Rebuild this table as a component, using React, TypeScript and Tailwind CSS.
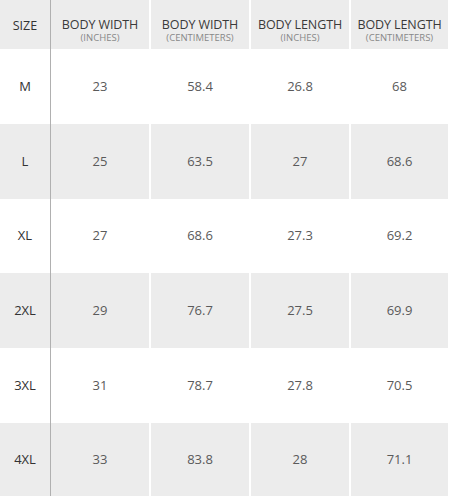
const headers = [
  { title: "BODY WIDTH", unit: "(INCHES)" },
  { title: "BODY WIDTH", unit: "(CENTIMETERS)" },
  { title: "BODY LENGTH", unit: "(INCHES)" },
  { title: "BODY LENGTH", unit: "(CENTIMETERS)" },
];

const rows = [
  { size: "M", values: ["23", "58.4", "26.8", "68"] },
  { size: "L", values: ["25", "63.5", "27", "68.6"] },
  { size: "XL", values: ["27", "68.6", "27.3", "69.2"] },
  { size: "2XL", values: ["29", "76.7", "27.5", "69.9"] },
  { size: "3XL", values: ["31", "78.7", "27.8", "70.5"] },
  { size: "4XL", values: ["33", "83.8", "28", "71.1"] },
];

const widths = ["w-[98px]", "w-[98px]", "w-[98px]", "w-[97px]"];

export default function App() {
  return (
    <div className="w-[450px] h-[500px] bg-white overflow-hidden font-['Open_Sans',sans-serif]">
      {/* header */}
      <div className="flex h-[49px]">
        <div className="w-[51px] border-r border-[#b0b0b0] bg-[#ececec] flex items-center justify-center pt-[3px] text-[12.5px] text-[#333]">
          SIZE
        </div>
        <div className="flex gap-[2px]">
          {headers.map((h, i) => (
            <div
              key={i}
              className={`${widths[i]} bg-[#ececec] flex flex-col items-center justify-center pt-[12px] leading-none`}
            >
              <span className="text-[12.5px] text-[#3a3a3a] tracking-[-0.1px]">{h.title}</span>
              <span className="text-[9.5px] text-[#888] mt-[2px]">{h.unit}</span>
            </div>
          ))}
        </div>
      </div>

      {rows.map((r, idx) => {
        const grey = idx % 2 === 1;
        const bg = grey ? "bg-[#ececec]" : "bg-white";
        const h = idx === rows.length - 1 ? "h-[73px]" : idx === 2 ? "h-[74px]" : "h-[75px]";
        return (
          <div key={r.size} className={`flex ${h}`}>
            <div
              className={`w-[51px] border-r border-[#b0b0b0] ${bg} flex items-center justify-center text-[13px] text-[#333]`}
            >
              {r.size}
            </div>
            <div className="flex gap-[2px]">
              {r.values.map((v, i) => (
                <div
                  key={i}
                  className={`${widths[i]} ${bg} flex items-center justify-center text-[13px] text-[#5a5a5a]`}
                >
                  {v}
                </div>
              ))}
            </div>
          </div>
        );
      })}
    </div>
  );
}
